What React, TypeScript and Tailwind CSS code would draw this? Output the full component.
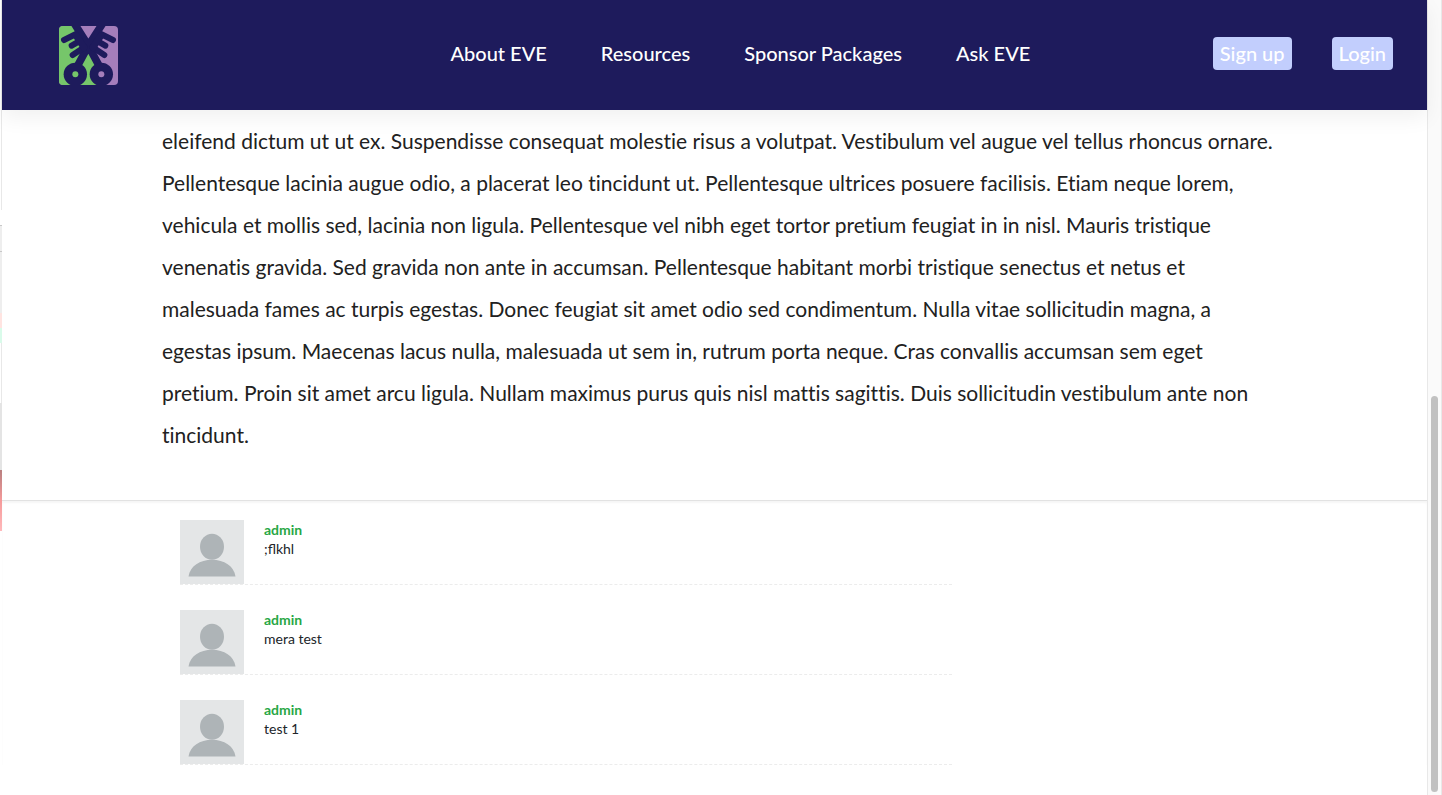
const navItems = ["About EVE", "Resources", "Sponsor Packages", "Ask EVE"];

const comments = [
  { id: 1, author: "admin", text: ";flkhl" },
  { id: 2, author: "admin", text: "mera test" },
  { id: 3, author: "admin", text: "test 1" },
];

function Logo() {
  return (
    <svg viewBox="33 33 177 177" className="size-[59px]" role="img" aria-label="EVE">
      <defs>
        <clipPath id="logo-shape">
          <rect x="33" y="33" width="177" height="177" rx="12" />
        </clipPath>
      </defs>
      <g clipPath="url(#logo-shape)">
        <rect x="33" y="33" width="177" height="177" fill="#a57ebb" />
        <path d="M33 33H80L121 100L160 178V210H33Z" fill="#76c66a" />
        <g stroke="#1e1b5c" fill="none" strokeLinecap="round">
          <path d="M80 27L121 92L160 165M163 27L121 92L82 165" strokeWidth="23" />
          <path
            d="M48 75L84 57M71 92L97 77M74 120L110 96M195 75L159 57M172 92L146 77M169 120L133 96"
            strokeWidth="18"
          />
          <path d="M84 62L108 98M159 62L135 98" strokeWidth="20" />
        </g>
        <circle cx="82" cy="178" r="35" fill="#1e1b5c" />
        <circle cx="160" cy="178" r="35" fill="#1e1b5c" />
        <circle cx="82" cy="178" r="9" fill="#76c66a" />
        <circle cx="160" cy="178" r="9" fill="#a57ebb" />
      </g>
    </svg>
  );
}

function Avatar() {
  return (
    <svg viewBox="0 0 64 64" className="size-16 shrink-0" aria-hidden="true">
      <rect width="64" height="64" fill="#e4e6e7" />
      <ellipse cx="32" cy="26.7" rx="12" ry="13" fill="#aeb4b7" />
      <path d="M8.5 56.5C10 46 20 39.7 32 39.7S54 46 55.5 56.5Z" fill="#aeb4b7" />
    </svg>
  );
}

function Header() {
  return (
    <header className="relative z-10 flex h-[110px] items-center bg-[#1e1b5c] pl-[57px] pr-[34px] text-xl font-medium text-white shadow-[0_8px_20px_rgba(0,0,0,0.06)]">
      <a href="#home">
        <Logo />
      </a>
      <nav className="flex flex-1 justify-center gap-[54px] pb-1 pl-[150px]">
        {navItems.map((item) => (
          <a key={item} href="#nav">
            {item}
          </a>
        ))}
      </nav>
      <div className="flex gap-10 pb-[3px]">
        <button type="button" className="h-[33px] rounded bg-[#c2cefd] px-[7px] pb-[2px]">
          Sign up
        </button>
        <button type="button" className="h-[33px] rounded bg-[#c2cefd] px-[7px] pb-[2px]">
          Login
        </button>
      </div>
    </header>
  );
}

export default function App() {
  return (
    <div className="flex h-screen overflow-hidden bg-white font-['Lato',sans-serif] text-[#212529]">
      <div className="flex w-[2px] shrink-0 flex-col" aria-hidden="true">
        <div className="h-[210px] border-r border-[#e8e8e8]" />
        <div className="h-[15px]" />
        <div className="h-[26px] border-t border-[#c8c8c8] bg-[#eeeeee]" />
        <div className="h-[62px] border-t border-[#c8c8c8] bg-[#eeeeee]" />
        <div className="h-[15px] bg-[#ffe4e1]" />
        <div className="h-[15px] bg-[#d9fbea]" />
        <div className="h-[60px] border-r border-[#e8e8e8]" />
        <div className="h-[67px] bg-[#e4e4e4]" />
        <div className="h-[61px] bg-linear-to-b from-[#b98080] via-[#f59a9a] to-[#ffb9bb]" />
      </div>
      <div className="min-w-0 flex-1">
        <Header />
        <main>
          <article className="pt-[10px] pr-[147px] pb-11 pl-40 text-[21px] leading-[42px] text-[#212121] [font-variant-ligatures:none]">
            <p>
              eleifend dictum ut ut ex. Suspendisse consequat molestie risus a volutpat. Vestibulum vel
              augue vel tellus rhoncus ornare. Pellentesque lacinia augue odio, a placerat leo tincidunt
              ut. Pellentesque ultrices posuere facilisis. Etiam neque lorem, vehicula et mollis sed,
              lacinia non ligula. Pellentesque vel nibh eget tortor pretium feugiat in in nisl. Mauris
              tristique venenatis gravida. Sed gravida non ante in accumsan. Pellentesque habitant morbi
              tristique senectus et netus et malesuada fames ac turpis egestas. Donec feugiat sit amet
              odio sed condimentum. Nulla vitae sollicitudin magna, a egestas ipsum. Maecenas lacus
              nulla, malesuada ut sem in, rutrum porta neque. Cras convallis accumsan sem eget pretium.
              Proin sit amet arcu ligula. Nullam maximus purus quis nisl mattis sagittis. Duis
              sollicitudin vestibulum ante non tincidunt.
            </p>
          </article>
          <section
            aria-label="Comments"
            className="border-t border-[#e2e2e2] px-[178px] pt-[19px] shadow-[inset_0_2px_2px_rgba(0,0,0,0.04)]"
          >
            <ul className="flex max-w-[772px] flex-col gap-[25px]">
              {comments.map((comment) => (
                <li key={comment.id} className="flex gap-5 border-b border-dashed border-[#ececec]">
                  <Avatar />
                  <div className="text-sm leading-[19px]">
                    <a href="#author" className="block font-bold text-[#28a745]">
                      {comment.author}
                    </a>
                    <p>{comment.text}</p>
                  </div>
                </li>
              ))}
            </ul>
          </section>
        </main>
      </div>
      <div
        className="flex w-[15px] shrink-0 flex-col justify-end border-x border-[#e8e8e8] bg-[#fafafa] px-[3px] pb-[3px]"
        aria-hidden="true"
      >
        <div className="h-1/2 rounded-full bg-[#c1c1c1]" />
      </div>
    </div>
  );
}
